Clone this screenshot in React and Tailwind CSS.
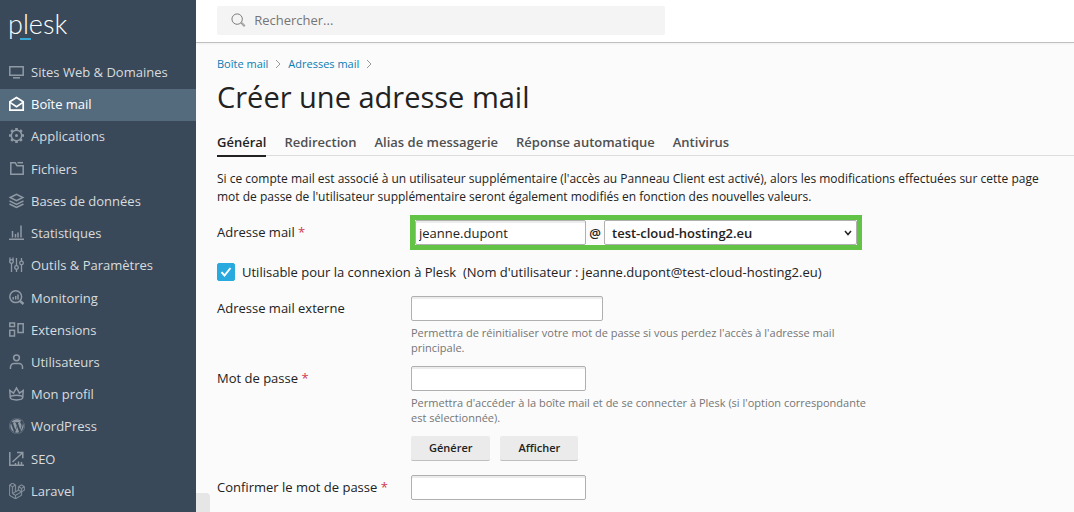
import React, { useState } from 'react';
import { FaWordpress, FaLaravel } from 'react-icons/fa';

function Icon({ children, size = 16, stroke = 1.5, className = '' }) {
  return (
    <svg
      width={size}
      height={size}
      viewBox="0 0 16 16"
      fill="none"
      stroke="currentColor"
      strokeWidth={stroke}
      className={className}
      aria-hidden="true"
    >
      {children}
    </svg>
  );
}

const menu = [
  {
    label: 'Sites Web & Domaines',
    icon: (
      <Icon>
        <path d="M.8 2.8h13.4v8.5H.8z" />
        <path d="M4 13.8h7" />
      </Icon>
    ),
  },
  {
    label: 'Boîte mail',
    icon: (
      <Icon stroke={1.7}>
        <path d="M.8 5.8v8.3h13.4V5.8L7.5 1.500.8 5.800z" />
        <path d="M1 6.400l6.500 4.400L14 6.400" />
      </Icon>
    ),
  },
  {
    label: 'Applications',
    icon: (
      <Icon>
        <circle cx="7.5" cy="7.5" r="5.2" />
        <circle cx="7.5" cy="7.5" r="1.5" fill="currentColor" stroke="none" />
        <path
          d="M7.5 0v2.5M7.5 12.5V15M0 7.5h2.5M12.5 7.5H15M2.2 2.2L4 4M11 11l1.8 1.8M2.2 12.8L4 11M11 4l1.8-1.8"
          strokeWidth="2.6"
        />
      </Icon>
    ),
  },
  {
    label: 'Fichiers',
    icon: (
      <Icon>
        <path d="M1.8 1.7h4.4l1.8 3h6.200v8.500H1.800z" />
        <path d="M8.5 1.7h5.5" />
      </Icon>
    ),
  },
  {
    label: 'Bases de données',
    icon: (
      <Icon>
        <path d="M1.2 4.5l6.3-3.2 6.3 3.2-6.3 3.2z" />
        <path d="M.5 7.8l7 3.5 7-3.5M.5 11l7 3.5 7-3.5" />
      </Icon>
    ),
  },
  {
    label: 'Statistiques',
    icon: (
      <Icon>
        <path d="M0 14.3h15M3.5 12.5V6M6.5 12.5V9M9 12.5V7.5M12 12.5V.5" />
      </Icon>
    ),
  },
  {
    label: 'Outils & Paramètres',
    icon: (
      <Icon stroke={1.3}>
        <circle cx="2.5" cy="4.5" r="1.8" />
        <circle cx="7.5" cy="10.5" r="1.8" />
        <circle cx="12.5" cy="6" r="1.8" />
        <path d="M2.5 6.3V15M1 .5v3M4 .5v3M7.5 1v7.7M7.5 12.3V15M12.5 1v3.2M12.5 7.8V15" />
      </Icon>
    ),
  },
  {
    label: 'Monitoring',
    icon: (
      <Icon>
        <circle cx="6.7" cy="6.7" r="5.9" />
        <path d="M4.2 9.5V7M6.7 9.5V6M9 9.5V4.5" />
        <path d="M11 11l3.5 3" strokeWidth="2.4" />
      </Icon>
    ),
  },
  {
    label: 'Extensions',
    icon: (
      <Icon>
        <path d="M.8 1h4.7v3.5H.8zM.8 8.3h4.7v5.8H.8zM9 1.8h5.2v8.7H9z" />
      </Icon>
    ),
  },
  {
    label: 'Utilisateurs',
    icon: (
      <Icon>
        <circle cx="7.5" cy="3.8" r="2.9" />
        <path d="M1.5 15v-2a3.5 3.5 0 0 1 3.5-3.5h5a3.5 3.5 0 0 1 3.5 3.5v2" />
      </Icon>
    ),
  },
  {
    label: 'Mon profil',
    icon: (
      <Icon>
        <path d="M1.3 11.5L.8 4.5l3.7 2.7 3-5.2 3 5.2 3.7-2.7-.5 7" />
        <ellipse cx="7.5" cy="11.6" rx="6.2" ry="2.3" />
      </Icon>
    ),
  },
  { label: 'WordPress', icon: <FaWordpress size={16} aria-hidden="true" /> },
  {
    label: 'SEO',
    icon: (
      <Icon>
        <path d="M.8 1v13.2H15M3.5 11l10-9.2M8 1.5h5.8v5.8" />
        <path d="M6.5 14v-2M9.5 14v-3.5M12.5 14v-3" />
      </Icon>
    ),
  },
  {
    label: 'Laravel',
    icon: <FaLaravel size={16} stroke="currentColor" strokeWidth="14" aria-hidden="true" />,
  },
];

const tabs = ['Général', 'Redirection', 'Alias de messagerie', 'Réponse automatique', 'Antivirus'];

const inputClass =
  'h-[25px] rounded-xs border border-[#b0b0b0] bg-white px-[3px] text-[13px] text-[#222] shadow-[inset_0_2px_0_#ececec] outline-none';

function Sidebar({ active, onSelect }) {
  return (
    <aside className="w-[196px] shrink-0 bg-[#3a4959]">
      <div className="h-[57px] pt-2 pl-2">
        <a href="#accueil" className="relative inline-block font-[Lato] text-[27px] leading-8 font-light text-white">
          plesk
          <span className="absolute top-[30px] left-3 h-[2px] w-[11px] bg-[#3ba9d6]" />
        </a>
      </div>
      <nav>
        <ul className="flex h-[451px] flex-col justify-between">
          {menu.map((item) => (
            <li key={item.label}>
              <a
                href="#menu"
                onClick={() => onSelect(item.label)}
                className={
                  active === item.label
                    ? 'flex h-8 items-center gap-[6px] bg-[#546b7e] pb-[2px] pl-[9px] text-white'
                    : 'flex h-8 items-center gap-[6px] pb-[2px] pl-[9px] text-[#8f9aa5]'
                }
              >
                {item.icon}
                <span className={active === item.label ? 'text-white' : 'text-[#d8dcdf]'}>{item.label}</span>
              </a>
            </li>
          ))}
        </ul>
      </nav>
    </aside>
  );
}

function Chevron() {
  return (
    <svg width="6" height="10" viewBox="0 0 6 10" fill="none" stroke="#999" aria-hidden="true">
      <path d="M1 1l4 4-4 4" />
    </svg>
  );
}

function Label({ htmlFor, required, children }) {
  return (
    <label htmlFor={htmlFor} className="leading-[25px]">
      {children}
      {required && <span className="text-[#d0384e]"> *</span>}
    </label>
  );
}

function App() {
  const [active, setActive] = useState('Boîte mail');
  const [tab, setTab] = useState('Général');
  const [name, setName] = useState('jeanne.dupont');
  const [login, setLogin] = useState(true);
  const [show, setShow] = useState(false);

  return (
    <div className="flex min-h-screen bg-[#fbfbfb] font-['Open_Sans',sans-serif] text-[13px] leading-[18px] text-[#222]">
      <Sidebar active={active} onSelect={setActive} />

      <div className="relative min-w-0 flex-1 overflow-hidden">
        <header className="border-b border-[#bfbfbf] bg-white px-[21px] pt-[6px] pb-[7px] shadow-xs">
          <label className="flex h-[29px] max-w-[448px] items-center gap-2 rounded-xs bg-[#f4f4f4] pl-[14px] text-[#777]">
            <Icon stroke={1}>
              <circle cx="6.5" cy="6" r="5.5" />
              <path d="M10.4 10.1l3.3 3.6 1-1-3.5-3.4" />
            </Icon>
            <input
              type="search"
              aria-label="Rechercher"
              placeholder="Rechercher..."
              className="w-full bg-transparent pb-px outline-none placeholder:text-[#757575]"
            />
          </label>
        </header>

        <main className="pl-[21px]">
          <nav className="flex items-center gap-[7px] pt-3 text-[11px] text-[#0a7db3]">
            <a href="#boite">Boîte mail</a>
            <Chevron />
            <a href="#adresses">Adresses mail</a>
            <Chevron />
          </nav>

          <h1 className="pt-1 text-[29px] leading-[40px]">Créer une adresse mail</h1>

          <div role="tablist" className="mt-[15px] flex h-[24px] gap-[18px] border-b border-[#dcdcdc] font-semibold">
            {tabs.map((t) => (
              <button
                key={t}
                type="button"
                role="tab"
                aria-selected={tab === t}
                onClick={() => setTab(t)}
                className={
                  tab === t
                    ? 'h-[25px] border-b-2 border-[#222] pb-[3px] text-[#222]'
                    : 'h-[25px] border-b-2 border-transparent pb-[3px] text-[#505050]'
                }
              >
                {t}
              </button>
            ))}
          </div>

          <p className="mt-[14px] text-[12px] leading-[18px] whitespace-nowrap">
            Si ce compte mail est associé à un utilisateur supplémentaire (l'accès au Panneau Client est activé), alors les
            modifications effectuées sur cette page
            <br />
            mot de passe de l'utilisateur supplémentaire seront également modifiés en fonction des nouvelles valeurs.
          </p>

          <form className="pt-[9px]" onSubmit={(e) => e.preventDefault()}>
            {/* Adresse mail + domaine */}
            <div className="grid grid-cols-[193px_1fr] items-center">
              <Label htmlFor="name" required>Adresse mail</Label>
              <div className="flex w-[452px] items-center border-[5px] border-[#62c346]">
                <input
                  id="name"
                  value={name}
                  onChange={(e) => setName(e.target.value)}
                  className={inputClass + ' w-[171px]'}
                />
                <span className="w-[18px] text-center font-semibold">@</span>
                <div className="grid flex-1 items-center">
                  <select
                    aria-label="Domaine"
                    className="col-start-1 row-start-1 h-[25px] w-full appearance-none rounded-xs border border-[#b0b0b0] bg-white pl-[7px] font-semibold outline-none"
                  >
                    <option>test-cloud-hosting2.eu</option>
                  </select>
                  <svg width="8" height="6" viewBox="0 0 8 6" fill="none" stroke="#222" strokeWidth="1.5" className="pointer-events-none col-start-1 row-start-1 mr-[5px] justify-self-end" aria-hidden="true">
                    <path d="M1 1l3 3.500L7 1" />
                  </svg>
                </div>
              </div>
            </div>

            <div className="mt-[13px] flex items-center gap-[7px]">
              <div className="grid">
                <input
                  id="login"
                  type="checkbox"
                  checked={login}
                  onChange={(e) => setLogin(e.target.checked)}
                  className="peer col-start-1 row-start-1 size-[18px] appearance-none rounded-xs border border-[#b0b0b0] bg-white checked:border-[#28aade] checked:bg-[#28aade]"
                />
                <svg width="18" height="18" viewBox="0 0 18 18" fill="none" stroke="#fff" strokeWidth="2" className="pointer-events-none invisible col-start-1 row-start-1 peer-checked:visible" aria-hidden="true">
                  <path d="M4.5 9.2l3 3.3 6-7.5" />
                </svg>
              </div>
              <label htmlFor="login">
                Utilisable pour la connexion à Plesk&nbsp; (Nom d'utilisateur : {name}@test-cloud-hosting2.eu)
              </label>
            </div>

            <div className="mt-[15px] grid grid-cols-[194px_1fr] items-start">
              <Label htmlFor="external">Adresse mail externe</Label>
              <div>
                <input id="external" type="email" className={inputClass + ' block w-[192px]'} />
                <p className="mt-1 max-w-[470px] text-[11px] leading-[15px] text-[#757575]">
                  Permettra de réinitialiser votre mot de passe si vous perdez l'accès à l'adresse mail principale.
                </p>
              </div>
            </div>

            <div className="mt-[11px] grid grid-cols-[194px_1fr] items-start">
              <Label htmlFor="password" required>Mot de passe</Label>
              <div>
                <input id="password" type={show ? 'text' : 'password'} className={inputClass + ' block w-[175px]'} />
                <p className="mt-1 max-w-[470px] text-[11px] leading-[15px] text-[#757575]">
                  Permettra d'accéder à la boîte mail et de se connecter à Plesk (si l'option correspondante est sélectionnée).
                </p>
                <div className="mt-[11px] flex gap-[10px] text-[11px] font-semibold">
                  <button type="button" className="h-[25px] rounded-xs border-b border-[#bfbfbf] bg-[#ebebeb] px-[18px]">
                    Générer
                  </button>
                  <button type="button" onClick={() => setShow(!show)} className="h-[25px] rounded-xs border-b border-[#bfbfbf] bg-[#ebebeb] px-[18px]">
                    Afficher
                  </button>
                </div>
              </div>
            </div>

            <div className="mt-[14px] grid grid-cols-[194px_1fr] items-start">
              <Label htmlFor="confirm" required>Confirmer le mot de passe</Label>
              <input id="confirm" type={show ? 'text' : 'password'} className={inputClass + ' block w-[175px]'} />
            </div>
          </form>
        </main>

        {/* onglet de repli du menu */}
        <button type="button" aria-label="Réduire le menu" className="absolute bottom-0 left-0 h-[19px] w-[14px] rounded-tr-sm bg-[#e6e6e6]" />
      </div>
    </div>
  );
}

export default App;
